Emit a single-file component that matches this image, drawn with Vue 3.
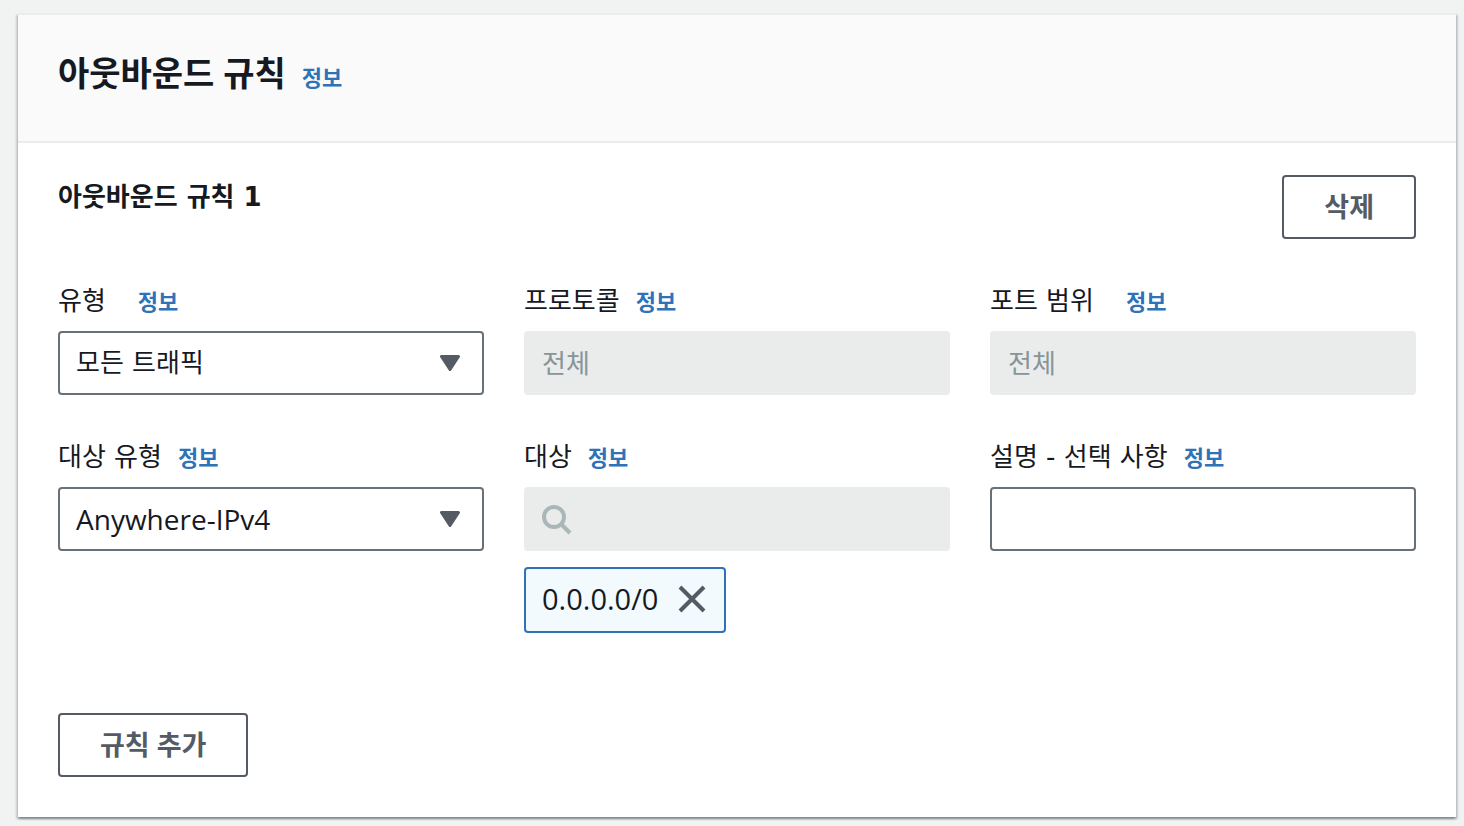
<script setup>
import { ref } from 'vue'

const trafficType = ref('모든 트래픽')
const destinationType = ref('Anywhere-IPv4')
const description = ref('')
</script>

<template>
  <main class="page">
    <section class="card" aria-labelledby="panel-title">
      <header class="card-header">
        <h2 id="panel-title">아웃바운드 규칙</h2>
        <a class="info" href="#">정보</a>
      </header>

      <div class="card-body">
        <div class="rule-head">
          <h3>아웃바운드 규칙 1</h3>
          <button type="button" class="btn">삭제</button>
        </div>

        <div class="fields">
          <div class="field">
            <div class="field-label wide">
              <label for="type">유형</label>
              <a class="info" href="#">정보</a>
            </div>
            <div class="select">
              <select id="type" v-model="trafficType">
                <option>모든 트래픽</option>
              </select>
              <svg class="caret" viewBox="0 0 20 16" aria-hidden="true">
                <path d="M1.5 1.5h17L10 14.5z" />
              </svg>
            </div>
          </div>

          <div class="field">
            <div class="field-label">
              <label for="protocol">프로토콜</label>
              <a class="info" href="#">정보</a>
            </div>
            <input id="protocol" class="control" type="text" value="전체" disabled />
          </div>

          <div class="field">
            <div class="field-label wide">
              <label for="port">포트 범위</label>
              <a class="info" href="#">정보</a>
            </div>
            <input id="port" class="control" type="text" value="전체" disabled />
          </div>

          <div class="field">
            <div class="field-label">
              <label for="dest-type">대상 유형</label>
              <a class="info" href="#">정보</a>
            </div>
            <div class="select latin">
              <select id="dest-type" v-model="destinationType">
                <option>Anywhere-IPv4</option>
              </select>
              <svg class="caret" viewBox="0 0 20 16" aria-hidden="true">
                <path d="M1.5 1.5h17L10 14.5z" />
              </svg>
            </div>
          </div>

          <div class="field">
            <div class="field-label">
              <label for="dest">대상</label>
              <a class="info" href="#">정보</a>
            </div>
            <div class="search">
              <svg viewBox="0 0 32 32" aria-hidden="true">
                <circle cx="14" cy="14" r="10" />
                <path d="M21 21l9 9" />
              </svg>
              <input id="dest" type="text" disabled />
            </div>
            <div class="token">
              <span>0.0.0.0/0</span>
              <button type="button" aria-label="0.0.0.0/0 제거">
                <svg viewBox="0 0 28 28" aria-hidden="true">
                  <path d="M2 2l24 24M26 2L2 26" />
                </svg>
              </button>
            </div>
          </div>

          <div class="field">
            <div class="field-label">
              <label for="desc">설명 - 선택 사항</label>
              <a class="info" href="#">정보</a>
            </div>
            <input id="desc" v-model="description" class="control" type="text" />
          </div>
        </div>

        <button type="button" class="btn add">규칙 추가</button>
      </div>
    </section>
  </main>
</template>

<style>
body {
  background: #f1f3f3;
}
</style>

<style scoped>
.page,
.page * {
  box-sizing: border-box;
}

.page {
  padding: 13px 8px 8px 18px;
  font-family: "Open Sans", "Noto Sans CJK KR", sans-serif;
  font-size: 26px;
  line-height: 44px;
  color: #16191f;
}

.card {
  background: #fff;
  border-top: 2px solid #eaeded;
  box-shadow:
    0 2px 2px rgba(0, 28, 36, 0.3),
    2px 2px 2px rgba(0, 28, 36, 0.15),
    -2px 2px 2px rgba(0, 28, 36, 0.15);
}

.card-header {
  display: flex;
  align-items: baseline;
  gap: 16px;
  padding: 36px 40px 42px;
  background: #fafafa;
  border-bottom: 2px solid #eaebeb;
}

h2,
h3 {
  margin: 0;
  font-weight: 700;
}

h2 {
  font-size: 34px;
}

h3 {
  font-size: 26px;
}

.info {
  color: #2e73b8;
  font-size: 22px;
  font-weight: 700;
  text-decoration: none;
}

.card-body {
  padding: 32px 40px 40px;
}

.rule-head {
  display: flex;
  justify-content: space-between;
  align-items: flex-start;
}

.rule-head h3,
.field-label label,
.control,
.select select {
  font-family: "DejaVu Sans", "Noto Sans CJK KR", sans-serif;
}

.btn {
  height: 64px;
  padding: 0 40px;
  border: 2px solid #545b64;
  border-radius: 4px;
  background: #fff;
  color: #545b64;
  font-family: inherit;
  font-size: 27px;
  font-weight: 700;
  line-height: 44px;
}

.add {
  display: block;
  margin-top: 80px;
}

.fields {
  display: grid;
  grid-template-columns: repeat(3, minmax(0, 1fr));
  gap: 40px;
  margin-top: 40px;
}

.field-label {
  display: flex;
  align-items: baseline;
  gap: 16px;
  height: 44px;
  margin-bottom: 8px;
}

.field-label.wide {
  gap: 32px;
}

.control,
.select select {
  display: block;
  width: 100%;
  height: 64px;
  margin: 0;
  padding: 0 16px;
  border: 2px solid #687078;
  border-radius: 4px;
  background: #fff;
  color: #16191f;
  font-size: 26px;
  line-height: 44px;
}

.control {
  padding-bottom: 4px;
}

.control:disabled {
  border-color: #eaebeb;
  background: #eaebeb;
  color: #879596;
}

.select {
  display: grid;
  align-items: center;
}

.select select,
.caret {
  grid-area: 1 / 1;
}

.select select {
  appearance: none;
}

.select.latin select {
  font-family: "Open Sans", sans-serif;
  font-size: 28px;
  font-weight: 500;
}

.caret {
  justify-self: end;
  width: 20px;
  height: 16px;
  margin-right: 24px;
  fill: #545b64;
  stroke: #545b64;
  stroke-width: 3;
  stroke-linejoin: round;
  pointer-events: none;
}

.search {
  display: flex;
  align-items: center;
  gap: 12px;
  height: 64px;
  padding: 0 16px;
  border-radius: 4px;
  background: #eaebeb;
}

.search svg {
  flex: none;
  width: 32px;
  height: 32px;
  fill: none;
  stroke: #aab7b8;
  stroke-width: 4;
}

.search input {
  flex: 1;
  min-width: 0;
  height: 60px;
  padding: 0;
  border: 0;
  background: transparent;
  font: inherit;
}

.token {
  display: inline-flex;
  align-items: center;
  gap: 20px;
  height: 66px;
  margin-top: 16px;
  padding: 0 18px 0 16px;
  border: 2px solid #2e73b8;
  border-radius: 4px;
  background: #f2fafd;
  font-size: 29px;
  font-weight: 500;
  vertical-align: top;
}

.token span {
  padding-bottom: 2px;
}

.token button {
  display: flex;
  padding: 0 0 2px;
  border: 0;
  background: none;
}

.token svg {
  width: 28px;
  height: 28px;
  fill: none;
  stroke: #545b64;
  stroke-width: 4;
}
</style>
